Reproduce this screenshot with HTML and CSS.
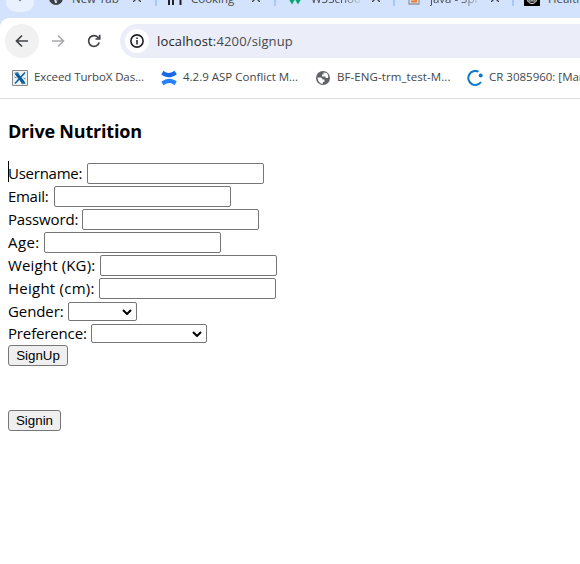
FILE: index.html
```html
<!DOCTYPE html>
<html lang="en">
<head>
<meta charset="utf-8">
<title>Drive Nutrition</title>
<link rel="stylesheet" href="styles.css">
</head>
<body>
<header class="browser">
  <div class="tabs">
    <div class="tab-search"><svg width="10" height="6" viewBox="0 0 10 6"><path d="M3.500-1 5 .6 6.500-1" fill="none" stroke="#777" stroke-width="1.300"/></svg></div>
    <div class="tab tab-new">
      <svg class="fav" viewBox="0 0 14 14"><circle cx="7" cy="7" r="7" fill="#3c4043"/><path d="M2 5c3 1 4 2 4 3s1 2 1 4M8 3c0 2 1 3 4 3-1 2-3 1-4 3" fill="none" stroke="#d3e3fd" stroke-width="2"/></svg>
      <span class="tab-title">New Tab</span><svg class="x" viewBox="0 0 8 8"><path d="m0 0 8 8M8 0 0 8"/></svg>
    </div>
    <div class="tab tab-cook">
      <svg class="fav" viewBox="0 0 14 14"><path d="M1 0v14M5 0v14M12.500 14V2H9" fill="none" stroke="#222" stroke-width="2"/></svg>
      <span class="tab-title">Cooking</span><svg class="x" viewBox="0 0 8 8"><path d="m0 0 8 8M8 0 0 8"/></svg>
    </div>
    <div class="tab tab-w3">
      <svg class="fav" viewBox="0 0 14 14"><path d="m1 6 3 5 3-5 3 5 3-5" fill="none" stroke="#04aa6d" stroke-width="2.500"/></svg>
      <span class="tab-title fade">W3Schoo</span><svg class="x" viewBox="0 0 8 8"><path d="m0 0 8 8M8 0 0 8"/></svg>
    </div>
    <div class="tab tab-java">
      <svg class="fav" viewBox="0 0 14 14"><path d="M2 8v5h10V8" fill="none" stroke="#999" stroke-width="1.300"/><path d="M4 10.500h6M4 8l6 .6" stroke="#f48024" stroke-width="1.800"/></svg>
      <span class="tab-title fade">java - Spr</span><svg class="x" viewBox="0 0 8 8"><path d="m0 0 8 8M8 0 0 8"/></svg>
    </div>
    <div class="tab tab-health">
      <svg class="fav" viewBox="0 0 16 14"><path d="M0 0h16v14H0z"/><circle cx="8" cy="6.500" r="5" fill="none" stroke="#eee"/><path d="M5 6v3h6V6M8 4v5" fill="none" stroke="#ccc"/></svg>
      <span class="tab-title">Health</span>
    </div>
  </div>
  <div class="toolbar">
    <div class="nav back"><svg width="14" height="14" viewBox="0 0 14 14"><path d="M13 7H2M7 1.500 1.500 7 7 12.500"/></svg></div>
    <div class="nav forward"><svg width="14" height="14" viewBox="0 0 14 14"><path d="M1 7h11M7 1.500 12.500 7 7 12.500"/></svg></div>
    <div class="nav reload"><svg width="14" height="14" viewBox="0 0 14 14"><path d="M12.200 8.500A5.400 5.400 0 1 1 11.400 3.800L12.700 5M12.700.8V5H8.500"/></svg></div>
    <div class="address">
      <div class="info"><svg width="14" height="14" viewBox="0 0 14 14"><circle cx="7" cy="7" r="6.100" fill="none" stroke="#202124" stroke-width="1.600"/><path d="M7 6v4.500M7 3.500v1.500" stroke="#202124" stroke-width="1.500"/></svg></div>
      <span class="url"><b>localhost</b>:4200/signup</span>
    </div>
  </div>
  <nav class="bookmarks">
    <div class="bm bm-a"><svg viewBox="0 0 16 16"><path d="M.5.5h15v15H.5z" fill="#eef2f5" stroke="#888"/><path d="M4 3 12 13.500" stroke="#0b5c9c" stroke-width="3.200"/><path d="M13 2.500 3 13.500" stroke="#0b5c9c" stroke-width="1.500"/><path d="M2.500 3h4M9.500 13.500h4M2.500 7l2 1M11.500 8l2 1" stroke="#4389ba"/></svg><span>Exceed TurboX Das...</span></div>
    <div class="bm bm-b"><svg viewBox="0 0 16 16"><path d="M2.500.8C6 3.500 8.500 4 13.500.8L15.800 4.200C10 8.500 5.500 8 .3 4.800z" fill="#1769e8"/><path d="M.3 11.800C6 7.500 10.500 8 15.700 11.200L13.500 15.200C10 12.500 7.500 12 2.500 15.200z" fill="#2681ff"/></svg><span>4.2.9 ASP Conflict M...</span></div>
    <div class="bm bm-c"><svg viewBox="0 0 16 16"><circle cx="8" cy="8" r="7" fill="#5f6368"/><path d="M2.500 7.500h3q2 0 2 2h2v2q-2 0-2 2.500Q3 13 2.500 7.500M8.500 2.500v2H7v2h3.500V8H13q1-3-1.500-5z" fill="#fff"/></svg><span>BF-ENG-trm_test-M...</span></div>
    <div class="bm bm-d"><svg viewBox="0 0 16 16"><path d="M11.500 1.700A7 7 0 1 0 14 12" fill="none" stroke="#0c7bc9" stroke-width="2"/><circle cx="13.700" cy="5.500" r="2" fill="#0c7bc9"/></svg><span>CR 3085960: [Man</span></div>
  </nav>
</header>
<main>
  <h3>Drive Nutrition</h3>
  <form>
    <div class="row caret"><label class="l-user" for="u">Username:</label><input id="u"></div>
    <div class="row"><label class="l-email" for="e">Email:</label><input id="e"></div>
    <div class="row"><label class="l-pass" for="p">Password:</label><input id="p" type="password"></div>
    <div class="row"><label class="l-age" for="a">Age:</label><input id="a"></div>
    <div class="row"><label class="l-weight" for="w">Weight (KG):</label><input id="w"></div>
    <div class="row"><label class="l-height" for="h">Height (cm):</label><input id="h"></div>
    <div class="row"><label class="l-gender" for="g">Gender:</label><div class="select s-gender" id="g"><svg viewBox="0 0 10 6"><path d="m1 1 4 4 4-4"/></svg></div></div>
    <div class="row row-pref"><label class="l-pref" for="f">Preference:</label><div class="select s-pref" id="f"><svg viewBox="0 0 10 6"><path d="m1 1 4 4 4-4"/></svg></div></div>
    <button type="button" class="signup">SignUp</button>
  </form>
  <button type="button" class="signin">Signin</button>
</main>
</body>
</html>
```
FILE: styles.css
```css
* { box-sizing: border-box; }
body { margin: 0; background: #fff; color: #000; font-family: "Open Sans", "Noto Sans", sans-serif; width: 580px; height: 564px; overflow: hidden; }
svg { display: block; flex: none; }
.browser { height: 99px; background: #d3e3fd; border-bottom: 1px solid #dcdee1; overflow: hidden; }
.tabs { display: flex; height: 18px; overflow: hidden; color: #474747; font-size: 11.5px; }
.tab-search { width: 28px; height: 12px; margin-left: 6px; background: #e9f0fe; border-radius: 0 0 10px 10px; display: flex; justify-content: center; flex: none; }
.tab { display: flex; align-items: flex-start; flex: none; height: 6px; }
.tab-new { width: 121px; padding-left: 15px; }
.tab-cook { width: 119px; padding-left: 11px; }
.tab-w3 { width: 119px; padding-left: 12px; }
.tab-java { width: 119px; padding-left: 12px; }
.tab-health { width: 90px; padding-left: 10px; }
.tab + .tab { border-left: 2px solid #a8c7fa; }
.fav { width: 14px; height: 14px; margin-top: -9px; }
.tab-health .fav { width: 16px; margin-top: -8px; }
.tab-title { line-height: 16px; margin: -9px 0 0 9px; width: 52px; white-space: nowrap; }
.tab-health .tab-title { margin-left: 8px; }
.fade { -webkit-mask-image: linear-gradient(90deg, #000 60%, transparent); mask-image: linear-gradient(90deg, #000 60%, transparent); }
.x { width: 8px; height: 8px; margin: -6px 0 0 9px; fill: none; stroke: #474747; stroke-width: 1.4; }
.toolbar { height: 46px; background: #fff; border-radius: 9px 0 0 0; padding: 6px 0 0 5px; display: flex; }
.nav { width: 34px; height: 34px; display: flex; align-items: center; justify-content: center; border-radius: 50%; margin-right: 2px; flex: none; fill: none; stroke: #404347; stroke-width: 1.7; }
.back { background: #f1f1f1; }
.forward { stroke: #a8aaad; }
.reload { margin-right: 9px; }
.address { flex: 1; height: 34px; border-radius: 17px 0 0 17px; background: #ebeef8; padding-left: 5px; display: flex; align-items: center; }
.info { width: 24px; height: 24px; border-radius: 50%; background: #fff; display: flex; align-items: center; justify-content: center; }
.url { font-size: 13px; margin-left: 8px; color: #47494d; white-space: nowrap; letter-spacing: 0.15px; }
.url b { font-weight: 400; color: #1f1f1f; }
.bookmarks { height: 34px; background: #fff; display: flex; align-items: center; padding: 0 0 6px 12px; font-size: 11.5px; color: #43464a; }
.bm { display: flex; align-items: center; gap: 6px; white-space: nowrap; flex: none; }
.bm svg { width: 16px; height: 16px; }
.bm span { line-height: 16px; padding-bottom: 2px; }
.bm-a { width: 149px; letter-spacing: -0.1px; }
.bm-b { width: 154px; }
.bm-c { width: 152px; letter-spacing: 0.08px; }
main { padding: 19px 8px 0; }
h3 { margin: 0 0 18px; font-size: 18px; line-height: 26px; height: 26px; font-weight: 700; letter-spacing: -0.2px; }
.row { display: flex; align-items: center; height: 23px; position: relative; }
.row label { font-size: 15px; line-height: 20px; padding-bottom: 2px; white-space: nowrap; flex: none; }
.row-pref { height: 21px; }
.row input { width: 177px; height: 21px; margin: 0; border: 1px solid #767676; border-radius: 2px; background: #fff; }
.caret::before { content: ""; position: absolute; left: 0; top: -1px; width: 1px; height: 21px; background: #000; }
.row .l-user { width: 79px; letter-spacing: -0.25px; }
.row .l-email { width: 46px; letter-spacing: -0.3px; }
.row .l-pass { width: 74px; letter-spacing: -0.15px; }
.row .l-age { width: 36px; letter-spacing: 0.4px; }
.row .l-weight { width: 92px; letter-spacing: 0.15px; }
.row .l-height { width: 91px; letter-spacing: 0.25px; }
.row .l-gender { width: 60px; letter-spacing: -0.1px; }
.row .l-pref { width: 83px; letter-spacing: -0.15px; }
.select { height: 19px; border: 1px solid #767676; border-radius: 2px; display: flex; align-items: center; justify-content: flex-end; padding-right: 4px; }
.select svg { width: 10px; height: 6px; fill: none; stroke: #000; stroke-width: 2; }
.s-gender { width: 69px; }
.s-pref { width: 116px; }
button { display: block; height: 21px; padding: 0; margin: 0; border: 1px solid #767676; border-radius: 3px; background: #efefef; color: #000; font: 13.333px/19px "Liberation Sans", Arial, sans-serif; }
.signup { width: 60px; margin-top: 1px; }
.signin { width: 53px; margin-top: 44px; }
```
